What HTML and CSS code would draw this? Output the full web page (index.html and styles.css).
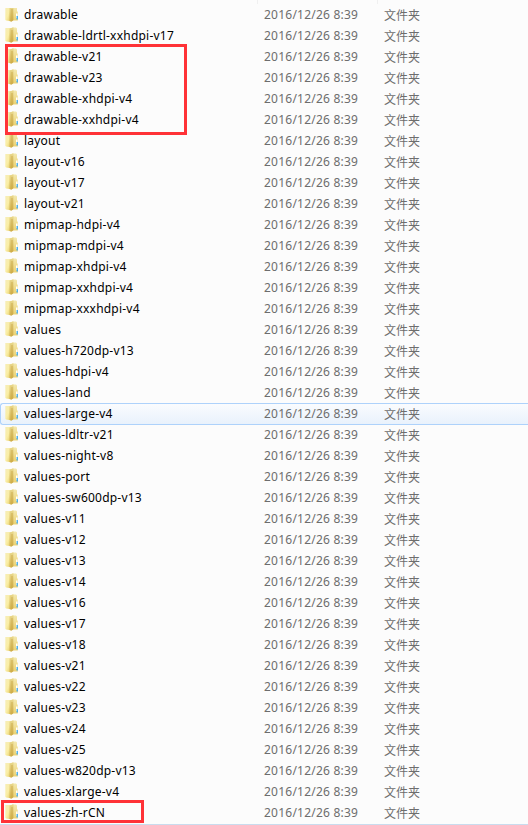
FILE: index.html
```html
<!DOCTYPE html>
<html lang="zh-CN">
<head>
<meta charset="utf-8">
<title>res</title>
<link rel="stylesheet" href="styles.css">
</head>
<body>
<svg class="defs" width="0" height="0" aria-hidden="true">
  <defs>
    <linearGradient id="back" x1="0" x2="1" y1="0" y2="1"><stop offset="0" stop-color="#f6edb8"/><stop offset=".5" stop-color="#faeea6"/><stop offset="1" stop-color="#e2c860"/></linearGradient>
    <linearGradient id="front" x1="0" x2="0" y1="0" y2="1"><stop offset="0" stop-color="#e9d88c"/><stop offset="1" stop-color="#d2b04a"/></linearGradient>
    <linearGradient id="side" x1="0" x2="0" y1="0" y2="1"><stop offset="0" stop-color="#f3e8ae"/><stop offset="1" stop-color="#ecd272"/></linearGradient>
  </defs>
  <symbol id="folder" viewBox="0 0 14 16">
    <path d="M7 .5h4l1 1V5l.8 1v8.500H7z" fill="url(#side)"/>
    <path d="M11 7.500h1.500V12H11z" fill="#fff"/>
    <path d="M11.500 10H13v3.500h-1.500z" fill="#52b0e8"/>
    <path d="M.3 1h6v14.200L1 14.500l-.7-.8z" fill="url(#back)"/>
    <path d="M4.500 1.500L8.500.3V14L6.500 15.700 4.500 15z" fill="url(#front)"/>
    <path d="M7 3v12" fill="none" stroke="#c7a544" stroke-width=".7"/>
  </symbol>
</svg>
<header class="columns"><span></span><span></span><span></span></header>
<main class="files" id="files"></main>
<div class="mark mark-drawables"></div>
<div class="mark mark-locale"></div>
<script src="script.js"></script>
</body>
</html>
```
FILE: styles.css
```css
* { box-sizing: border-box; }
body {
  margin: 0;
  height: 825px;
  overflow: hidden;
  position: relative;
  background: #fcfcfc;
  border-bottom: 1px solid #c9dcee;
  font: 12px/21px "Noto Sans", "Noto Sans CJK SC", sans-serif;
  color: #6d6d6d;
}
.defs { position: absolute; }
.columns, .row {
  display: grid;
  grid-template-columns: 258px 120px 1fr;
}
.columns { height: 4px; }
.columns span:not(:last-child) { border-right: 1px solid #f0f0f0; }
.row { height: 21px; }
.row.hover {
  height: 22px;
  margin-bottom: -1px;
  border: 1px solid #aed2fb;
  border-right: 0;
  border-radius: 3px 0 0 3px;
  background: linear-gradient(#fafcfe, #e9f2fc);
}
.row.hover > * { margin-left: -1px; margin-top: -1px; }
.name { display: flex; color: #000; white-space: nowrap; letter-spacing: .22px; }
.icon { width: 14px; height: 16px; margin: 2px 5px 0; }
.row:first-child .icon { clip-path: inset(2px 0 0); }
.date, .kind { padding-left: 6px; white-space: nowrap; }
.date { letter-spacing: .23px; }
.kind { font-family: "Noto Sans CJK SC", sans-serif; }
.mark { position: absolute; border: 3px solid #ff3237; }
.mark-drawables { left: 5px; top: 44px; width: 182px; height: 91px; }
.mark-locale { left: 1px; top: 800px; width: 143px; height: 23px; }
```
FILE: script.js
```js
const names = `drawable
drawable-ldrtl-xxhdpi-v17
drawable-v21
drawable-v23
drawable-xhdpi-v4
drawable-xxhdpi-v4
layout
layout-v16
layout-v17
layout-v21
mipmap-hdpi-v4
mipmap-mdpi-v4
mipmap-xhdpi-v4
mipmap-xxhdpi-v4
mipmap-xxxhdpi-v4
values
values-h720dp-v13
values-hdpi-v4
values-land
values-large-v4
values-ldltr-v21
values-night-v8
values-port
values-sw600dp-v13
values-v11
values-v12
values-v13
values-v14
values-v16
values-v17
values-v18
values-v21
values-v22
values-v23
values-v24
values-v25
values-w820dp-v13
values-xlarge-v4
values-zh-rCN`.split("\n");

document.getElementById("files").innerHTML = names.map(name => `
  <div class="row${name === "values-large-v4" ? " hover" : ""}">
    <div class="name"><svg class="icon"><use href="#folder"/></svg><span>${name}</span></div>
    <div class="date">2016/12/26 8:39</div>
    <div class="kind">文件夹</div>
  </div>`).join("");
```
